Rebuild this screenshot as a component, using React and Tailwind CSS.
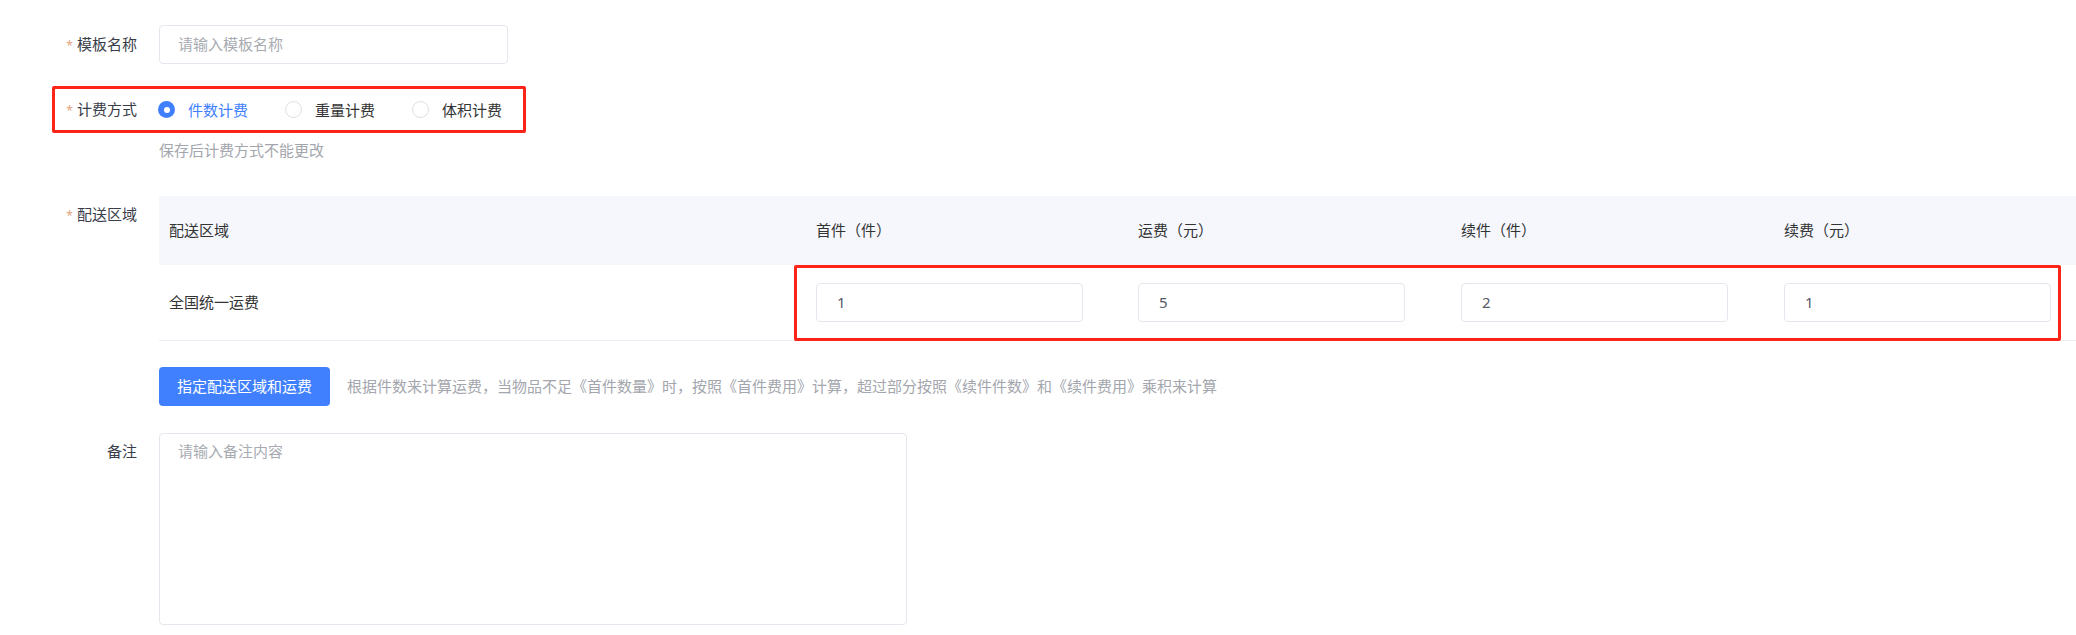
import React from "react";

const FONT = { fontFamily: '"Noto Sans", "Noto Sans CJK SC", sans-serif' };

function Label({ children, required, className = "" }) {
  return (
    <div className={`w-[137px] shrink-0 text-right text-[15px] leading-[20px] text-[#3a3d4a] ${className}`}>
      {required && <span className="mr-[4px] text-[12px] text-[#e3a57e]">*</span>}
      {children}
    </div>
  );
}

function Radio({ checked, label, last }) {
  return (
    <div className={`flex items-center ${last ? "" : "mr-[37px]"}`}>
      {checked ? (
        <span className="flex h-[17px] w-[17px] items-center justify-center rounded-full bg-[#4080ff]">
          <span className="h-[6px] w-[6px] rounded-full bg-white" />
        </span>
      ) : (
        <span className="h-[17px] w-[17px] rounded-full border border-[#dcdfe6] bg-white" />
      )}
      <span className={`ml-[13px] text-[15px] leading-[20px] ${checked ? "text-[#4080ff]" : "text-[#333333]"}`}>{label}</span>
    </div>
  );
}

function NumInput({ value }) {
  return (
    <div className="flex h-[39px] w-[267px] items-center rounded-[4px] border border-[#e4e7ed] bg-white pl-[20px] text-[15px] text-[#555a66]">
      {value}
    </div>
  );
}

export default function App() {
  const cols = [
    { w: "w-[647px]", head: "配送区域" },
    { w: "w-[322px]", head: "首件（件）" },
    { w: "w-[323px]", head: "运费（元）" },
    { w: "w-[323px]", head: "续件（件）" },
    { w: "w-[323px]", head: "续费（元）" },
  ];
  const values = ["1", "5", "2", "1"];
  return (
    <div className="h-[635px] w-[2076px] overflow-hidden bg-white" style={FONT}>
      <div className="pt-[25px]">
        {/* 模板名称 */}
        <div className="flex items-center">
          <Label required>模板名称</Label>
          <div className="ml-[22px] flex h-[39px] w-[349px] items-center rounded-[4px] border border-[#e4e7ed] px-[18px] text-[15px] text-[#a8abb2]">
            请输入模板名称
          </div>
        </div>

        {/* 计费方式 */}
        <div className="relative mt-[26px] flex h-[39px] items-center">
          <Label required>计费方式</Label>
          <div className="ml-[21px] flex items-center">
            <Radio checked label="件数计费" />
            <Radio label="重量计费" />
            <Radio label="体积计费" last />
          </div>
          <div className="pointer-events-none absolute left-[52px] top-[-4px] h-[47px] w-[474px] rounded-[2px] border-[3px] border-[#ff2418]" />
        </div>
        <div className="ml-[159px] mt-[11px] text-[15px] leading-[20px] text-[#a3a6ad]">保存后计费方式不能更改</div>

        {/* 配送区域 */}
        <div className="mt-[36px] flex items-start">
          <Label required className="pt-[8px]">配送区域</Label>
          <div className="ml-[22px] min-w-0 flex-1 overflow-hidden">
            <div className="w-[1938px]">
              <div className="flex h-[69px] items-center bg-[#f5f7fd]">
                {cols.map((c) => (
                  <div key={c.head} className={`${c.w} shrink-0 pl-[10px] text-[15px] text-[#333333]`}>
                    {c.head}
                  </div>
                ))}
              </div>
              <div className="relative flex h-[76px] items-center border-b border-[#ebeef5]">
                <div className="w-[647px] shrink-0 pl-[10px] text-[15px] text-[#333333]">全国统一运费</div>
                {values.map((v, i) => (
                  <div key={i} className={`${cols[i + 1].w} shrink-0 pl-[10px]`}>
                    <NumInput value={v} />
                  </div>
                ))}
                <div className="pointer-events-none absolute left-[635px] top-0 h-[76px] w-[1267px] rounded-[2px] border-[3px] border-[#ff2418]" />
              </div>
            </div>
          </div>
        </div>

        {/* button */}
        <div className="ml-[159px] mt-[26px] flex items-center">
          <div className="flex h-[39px] items-center rounded-[4px] bg-[#4080ff] px-[18px] text-[15px] text-white">
            指定配送区域和运费
          </div>
          <div className="ml-[17px] text-[15px] text-[#a3a6ad]">
            根据件数来计算运费，当物品不足《首件数量》时，按照《首件费用》计算，超过部分按照《续件件数》和《续件费用》乘积来计算
          </div>
        </div>

        {/* 备注 */}
        <div className="mt-[27px] flex items-start">
          <Label className="pt-[8px]">备注</Label>
          <div className="ml-[22px] h-[192px] w-[748px] rounded-[4px] border border-[#e4e7ed] px-[18px] pt-[7px] text-[15px] leading-[20px] text-[#a8abb2]">
            请输入备注内容
          </div>
        </div>
      </div>
    </div>
  );
}
